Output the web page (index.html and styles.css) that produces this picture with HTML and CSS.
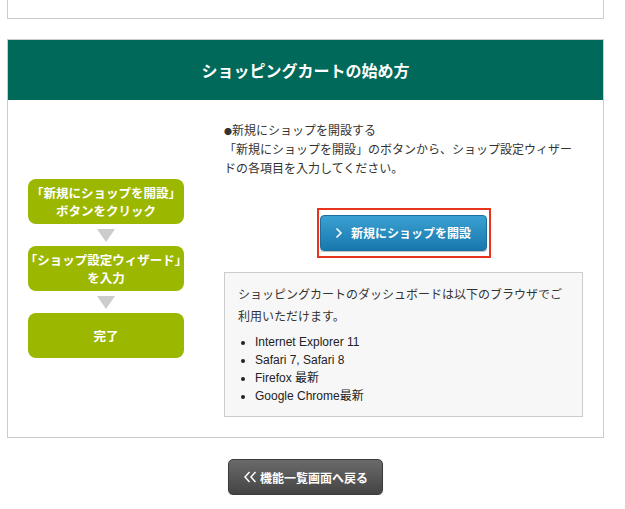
FILE: index.html
```html
<!DOCTYPE html>
<html lang="ja">
<head>
<meta charset="utf-8">
<link rel="stylesheet" href="styles.css">
</head>
<body>
<div class="page">
  <div class="prev-box"></div>
  <section class="guide">
    <h2 class="guide-title">ショッピングカートの始め方</h2>
    <div class="guide-body">
      <div class="steps">
        <div class="step">「新規にショップを開設」<br>ボタンをクリック</div>
        <div class="arrow"></div>
        <div class="step">「ショップ設定ウィザード」<br>を入力</div>
        <div class="arrow"></div>
        <div class="step">完了</div>
      </div>
      <div class="detail">
        <p class="intro"><span class="dot">●</span>新規にショップを開設する<br>「新規にショップを開設」のボタンから、ショップ設定ウィザードの各項目を入力してください。</p>
        <div class="cta-wrap">
          <div class="cta-frame">
            <a class="cta" href="#"><svg class="chev" width="8" height="12" viewBox="0 0 8 12"><path d="M1.5 1.5 L6 6 L1.5 10.5" fill="none" stroke="#fff" stroke-width="1.6"/></svg>新規にショップを開設</a>
          </div>
        </div>
        <div class="browsers">
          <p>ショッピングカートのダッシュボードは以下のブラウザでご利用いただけます。</p>
          <ul>
            <li>Internet Explorer 11</li>
            <li>Safari 7, Safari 8</li>
            <li>Firefox 最新</li>
            <li>Google Chrome最新</li>
          </ul>
        </div>
      </div>
    </div>
  </section>
  <div class="back-wrap">
    <a class="back" href="#"><svg class="dchev" width="14" height="12" viewBox="0 0 14 12"><path d="M6.5 1 L2 6 L6.5 11 M12.5 1 L8 6 L12.5 11" fill="none" stroke="#fff" stroke-width="1.5"/></svg>機能一覧画面へ戻る</a>
  </div>
</div>
</body>
</html>
```

FILE: styles.css
```css
html, body {
  margin: 0;
  padding: 0;
  background: #fff;
}
body {
  font-family: "Noto Sans CJK JP", "Liberation Sans", sans-serif;
  color: #333;
  font-size: 12px;
}
.page {
  width: 597px;
  margin-left: 7px;
}
.prev-box {
  box-sizing: border-box;
  height: 29px;
  margin-top: -10px;
  border: 1px solid #ccc;
}
.guide {
  margin-top: 20px;
  border: 1px solid #ccc;
}
.guide-title {
  margin: 0;
  height: 60px;
  line-height: 60px;
  background: #00695a;
  color: #fff;
  text-align: center;
  font-size: 16px;
  font-weight: bold;
}
.guide-body {
  display: flex;
  align-items: center;
  gap: 40px;
  padding: 20px 20px 20px 20px;
}
.steps {
  width: 156px;
  flex: none;
  display: flex;
  flex-direction: column;
  align-items: center;
}
.step {
  box-sizing: border-box;
  width: 156px;
  height: 45px;
  border-radius: 8px;
  background: #9cb700;
  color: #fff;
  font-weight: bold;
  font-size: 12.5px;
  line-height: 18px;
  display: flex;
  align-items: center;
  justify-content: center;
  text-align: center;
  white-space: nowrap;
}
.arrow {
  width: 0;
  height: 0;
  margin: 5px 0 4px;
  border-left: 9.5px solid transparent;
  border-right: 9.5px solid transparent;
  border-top: 13px solid #ccc;
}
.detail {
  flex: 1;
  min-width: 0;
}
.intro {
  margin: 0;
  font-size: 12px;
  line-height: 19px;
  color: #333;
}
.dot {
  font-size: 8px;
  line-height: 0;
}
.cta-wrap {
  margin-top: 31px;
  text-align: center;
  line-height: 0;
}
.cta-frame {
  display: inline-block;
  border: 2px solid #e8331f;
  padding: 5px 2px 5px 1px;
}
.cta {
  box-sizing: border-box;
  display: flex;
  align-items: center;
  justify-content: center;
  gap: 8px;
  width: 167px;
  height: 36px;
  border-radius: 4px;
  background: linear-gradient(#3aa0d2, #1878ad);
  border: 1px solid #1a6f9e;
  box-shadow: 0 1px 1px rgba(0,0,0,0.25);
  color: #fff;
  font-weight: bold;
  font-size: 12px;
  line-height: 1;
  text-decoration: none;
}
.browsers {
  margin-top: 14px;
  box-sizing: border-box;
  border: 1px solid #ccc;
  background: #f7f7f7;
  padding: 10px 14px 11px 13px;
}
.browsers p {
  margin: 0;
  line-height: 22px;
  font-size: 12px;
}
.browsers ul {
  margin: 6px 0 0;
  padding-left: 17px;
  font-family: "Liberation Sans", "Noto Sans CJK JP", sans-serif;
  font-size: 12px;
  line-height: 18px;
  color: #222;
}
.back-wrap {
  margin-top: 21px;
  display: flex;
  justify-content: center;
}
.back {
  box-sizing: border-box;
  display: flex;
  align-items: center;
  justify-content: center;
  gap: 3px;
  width: 155px;
  height: 36px;
  border-radius: 5px;
  background: linear-gradient(#6a6a6a, #444);
  border: 1px solid #3c3c3c;
  box-shadow: 0 1px 1px rgba(0,0,0,0.2);
  color: #fff;
  font-weight: bold;
  font-size: 12px;
  text-decoration: none;
}
```
